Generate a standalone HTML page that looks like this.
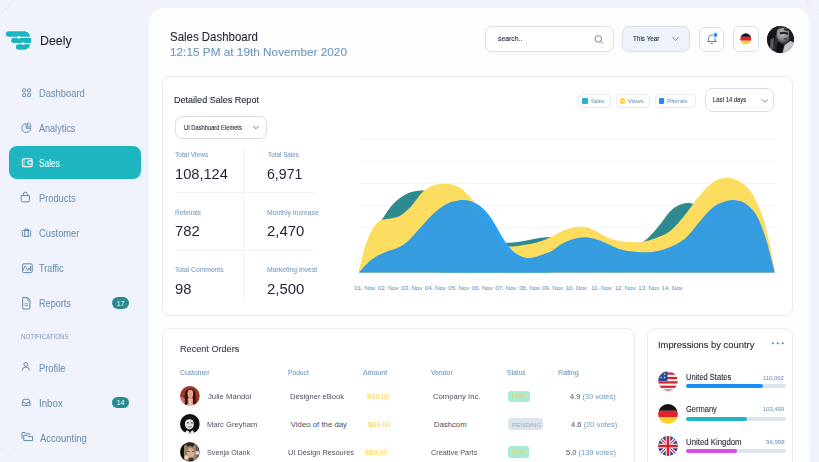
<!DOCTYPE html>
<html><head><meta charset="utf-8"><style>
html,body{margin:0;padding:0}
body{width:819px;height:462px;overflow:hidden;position:relative;background:#f0f3fb;font-family:"Liberation Sans", sans-serif}
.t{position:absolute;line-height:1;white-space:nowrap;transform-origin:0 0;-webkit-text-stroke:0.1px currentColor}
.a{position:absolute;box-sizing:border-box}
</style></head><body>
<!-- decorative arcs -->
<svg class="a" style="left:0;top:0" width="819" height="462">
  <circle cx="-60" cy="-60" r="95" fill="none" stroke="#d5d9e2" stroke-width="0.8" stroke-dasharray="3 2" opacity="0.8"/>
  <circle cx="850" cy="-25" r="50" fill="none" stroke="#dfe3ea" stroke-width="1" stroke-dasharray="4 3" opacity="0.8"/>
  <circle cx="-30" cy="500" r="60" fill="none" stroke="#dfe3ea" stroke-width="1" stroke-dasharray="4 3" opacity="0.6"/>
  <circle cx="852" cy="482" r="48" fill="none" stroke="#dfe3ea" stroke-width="1" stroke-dasharray="4 3" opacity="0.6"/>
</svg>
<!-- logo -->
<svg class="a" style="left:0;top:0" width="40" height="60">
  <defs><g id="lg">
    <path d="M8.6 31.3 H24 C27.5 31.3 29.5 33.5 30.2 36.8 H8.6 A2.75 2.75 0 0 1 8.6 31.3Z"/>
    <path d="M13.4 38.1 H31 V43 H13.4 A2.45 2.45 0 0 1 13.4 38.1Z"/>
    <path d="M18.6 44.3 H30.2 C29.5 47.5 27.5 49.8 24 49.8 H18.6 A2.75 2.75 0 0 1 18.6 44.3Z"/>
  </g></defs>
  <use href="#lg" fill="#fff" stroke="#fff" stroke-width="1.6"/>
  <use href="#lg" fill="#1cb4c0"/>
  <circle cx="18.9" cy="37.4" r="1.3" fill="#fff"/>
  <circle cx="23.1" cy="43.6" r="1.3" fill="#fff"/>
</svg>
<!-- active pill -->
<div class="a" style="left:8.6px;top:146.4px;width:132px;height:32.4px;border-radius:8px;background:#1eb6c1"></div>
<!-- sidebar icons -->
<svg class="a" style="left:0;top:0" width="150" height="462" fill="none" stroke="#6389a9" stroke-width="1">
  <!-- dashboard grid -->
  <rect x="22.75" y="88.95" width="2.9" height="2.9" rx="0.3" stroke-width="0.9"/>
  <rect x="27.65" y="88.95" width="2.9" height="2.9" rx="0.3" stroke-width="0.9"/>
  <rect x="22.75" y="93.75" width="2.9" height="2.9" rx="0.3" stroke-width="0.9"/>
  <rect x="27.65" y="93.75" width="2.9" height="2.9" rx="0.3" stroke-width="0.9"/>
  <!-- analytics pie -->
  <path d="M26 123.6 A4.4 4.4 0 1 0 30.7 128.2 H26 Z" stroke-width="0.95"/>
  <path d="M27.5 123.2 A3.8 3.8 0 0 1 31.2 126.9 H27.5 Z" stroke-width="0.9"/>
  <!-- products bag -->
  <path d="M21.2 195.6 H29.4 V200.6 A1.3 1.3 0 0 1 28.1 201.9 H22.5 A1.3 1.3 0 0 1 21.2 200.6 Z"/>
  <path d="M23.3 195.6 V194.2 A2 2 0 0 1 27.3 194.2 V195.6"/>
  <!-- customer briefcase -->
  <rect x="22.3" y="230.4" width="8.4" height="6" rx="1"/>
  <path d="M24.8 230.4 V229.2 H28.2 V230.4 M24.8 230.6 V236.2 M28.2 230.6 V236.2"/>
  <!-- traffic -->
  <rect x="22.6" y="263.8" width="9.6" height="8.8" rx="1.3"/>
  <path d="M23 270.2 L25.3 265.8 L27.6 270.6 L29.2 267.6 L30.6 270.8 V266" stroke-width="0.9"/>
  <!-- reports doc -->
  <path d="M22.7 297.6 H27.6 L29.9 299.9 V308.4 A0.6 0.6 0 0 1 29.3 309 H23.3 A0.6 0.6 0 0 1 22.7 308.4 Z"/>
  <path d="M27.4 297.8 V300.2 H29.8" stroke-width="0.8"/>
  <path d="M24.4 303.8 H28.2 M24.4 305.6 H28.2" stroke-width="0.9" opacity="0.8"/>
  <!-- profile -->
  <circle cx="25.8" cy="364.4" r="1.9"/>
  <path d="M22.2 370.5 A3.6 3.4 0 0 1 29.4 370.5"/>
  <!-- inbox -->
  <path d="M22.3 402.5 L23.6 399.3 H28.8 L30.1 402.5 V405.4 H22.3 Z M22.3 402.5 H24.8 A1.4 1.4 0 0 0 27.6 402.5 H30.1"/>
  <!-- accounting folders -->
  <path d="M22 438.5 V432.6 H25.2 L26.3 433.7 H29.6 V434.8"/>
  <path d="M23.8 435.3 H26.8 L27.9 436.4 H32.6 V440.6 H23.8 Z"/>
</svg>
<!-- sales wallet icon (white) -->
<svg class="a" style="left:0;top:0" width="40" height="180" fill="none" stroke="#ffffff" stroke-width="1.1">
  <rect x="22.5" y="158.8" width="9.6" height="7.8" rx="1"/>
  <path d="M32.1 160.9 H29.4 A1.5 1.5 0 0 0 29.4 164.3 H32.1"/>
  <path d="M24.2 159 V166.4" stroke-width="0.8" opacity="0.7"/>
</svg>
<!-- badges -->
<div class="a" style="left:112.2px;top:297.3px;width:17px;height:11.4px;border-radius:6px;background:#2a8a8e"></div>
<div class="a" style="left:112.1px;top:396.6px;width:17.3px;height:11.4px;border-radius:6px;background:#2a8a8e"></div>
<div class="t" style="left:116.6px;top:299.6px;font-size:7.2px;color:#fff;-webkit-text-stroke:0">17</div>
<div class="t" style="left:116.6px;top:398.9px;font-size:7.2px;color:#fff;-webkit-text-stroke:0">14</div>

<!-- main panel -->
<div class="a" style="left:149px;top:8px;width:661px;height:520px;border-radius:15px;background:#fdfdfe"></div>

<!-- header controls -->
<div class="a" style="left:485px;top:26px;width:129px;height:26px;border-radius:7px;border:1px solid #d5e0ea;background:#fff"></div>
<svg class="a" style="left:0;top:0" width="819" height="80" fill="none" stroke="#6a8caa" stroke-width="1">
  <circle cx="598.3" cy="38.9" r="3.3"/>
  <path d="M600.7 41.3 L603 43.6"/>
</svg>
<div class="a" style="left:622px;top:26px;width:68px;height:26px;border-radius:7px;border:1px solid #d5e0ea;background:#eef3fa"></div>
<div class="a" style="left:699px;top:27px;width:25px;height:25px;border-radius:6px;border:1px solid #d5e0ea;background:#fff"></div>
<svg class="a" style="left:0;top:0" width="819" height="80">
  <path d="M707.2 41.5 H716.8 M708.5 41.5 V38.4 A3.3 3.3 0 0 1 715.1 38.4 V41.5" fill="none" stroke="#5d86a8" stroke-width="1"/>
  <path d="M710.7 43.5 H712.9" stroke="#5d86a8" stroke-width="1"/>
  <circle cx="715.5" cy="34.9" r="2.3" fill="#1a8cf5" stroke="#fff" stroke-width="0.8"/>
</svg>
<div class="a" style="left:733px;top:26px;width:25.5px;height:26px;border-radius:6px;border:1px solid #d5e0ea;background:#fff"></div>
<svg class="a" style="left:739.7px;top:32.8px" width="11.6" height="11.6" viewBox="0 0 12 12">
  <defs><clipPath id="fc1"><circle cx="6" cy="6" r="5.7"/></clipPath></defs>
  <g clip-path="url(#fc1)"><rect x="0" y="0" width="12" height="4" fill="#151515"/><rect x="0" y="4" width="12" height="4" fill="#e3202c"/><rect x="0" y="8" width="12" height="4" fill="#fccf2a"/></g>
</svg>
<!-- header avatar -->
<svg class="a" style="left:766.8px;top:26px" width="27" height="27" viewBox="0 0 26 26">
  <defs>
    <clipPath id="av"><circle cx="13" cy="13" r="13"/></clipPath>
    <filter id="bl1"><feGaussianBlur stdDeviation="0.7"/></filter>
    <radialGradient id="fg" cx="0.45" cy="0.35" r="0.6"><stop offset="0" stop-color="#c2c4c7"/><stop offset="0.6" stop-color="#8a8d91"/><stop offset="1" stop-color="#3a3c40"/></radialGradient>
  </defs>
  <g clip-path="url(#av)">
    <rect width="26" height="26" fill="#2a2c30"/>
    <g filter="url(#bl1)">
    <path d="M0 0 H11 L8 10 L5 26 H0Z" fill="#141518"/>
    <path d="M9.5 3.5 Q14 0.5 20 2.5 L22.5 8 L21.5 14 L17.5 17.5 L12.5 16.5 L9 10Z" fill="url(#fg)"/>
    <path d="M12 6.2 Q16 4.8 20.5 6.6 L20 8.4 Q16 7.2 12.5 8.3Z" fill="#25272b"/>
    <path d="M16 11.5 L19.5 11.8 L18.5 13.3 L15.8 12.8Z" fill="#3a3c40"/>
    <path d="M21 1 L26 3 V17 L21.5 14Z" fill="#1c1e22"/>
    <path d="M15 26 L17 18.5 L22.5 14.5 L26 16 V26Z" fill="#c6c6c6"/>
    <path d="M8 26 L10.5 15.5 L16 18 L14.5 26Z" fill="#0f1012"/>
    <path d="M3.5 13 L6.5 11 L6 22 L3 24Z" fill="#5a5d61"/>
    <path d="M17 2 L21 3 L20 5 L16 4Z" fill="#2e3034"/>
    </g>
  </g>
</svg>
<!-- sales card -->
<div class="a" style="left:162px;top:76px;width:631px;height:240px;border-radius:8px;border:1px solid #e9edf3;background:#fff"></div>
<div class="a" style="left:175px;top:116px;width:92px;height:23px;border-radius:7px;border:1px solid #d5e0ea;background:#fff"></div>
<div class="a" style="left:578px;top:94px;width:33px;height:14px;border-radius:4px;border:1px solid #e7ecf2;background:#fff"></div>
<div class="a" style="left:615.5px;top:94px;width:34.5px;height:14px;border-radius:4px;border:1px solid #e7ecf2;background:#fff"></div>
<div class="a" style="left:654.5px;top:94px;width:41px;height:14px;border-radius:4px;border:1px solid #e7ecf2;background:#fff"></div>
<div class="a" style="left:581.9px;top:98.4px;width:5.9px;height:5.4px;border-radius:1.3px;background:#1fb5c1"></div>
<div class="a" style="left:619.5px;top:98.4px;width:5.9px;height:5.4px;border-radius:1.3px;background:#fdd95a"></div>
<div class="a" style="left:658.6px;top:98.4px;width:5.9px;height:5.4px;border-radius:1.3px;background:#1a8cf5"></div>
<div class="a" style="left:705px;top:88px;width:69px;height:24px;border-radius:7px;border:1px solid #d5e0ea;background:#fff"></div>
<svg class="a" style="left:0;top:0" width="819" height="130" fill="none" stroke="#6a8caa" stroke-width="1">
  <path d="M672.6 37.2 L675.6 40.6 L678.7 37.2"/>
  <path d="M253.3 126 L255.9 128.9 L258.6 126"/>
  <path d="M762 99.4 L764.9 102.4 L767.8 99.4"/>
</svg>
<!-- stats dividers -->
<div class="a" style="left:243px;top:150px;width:1px;height:150px;background:#eef1f5"></div>
<div class="a" style="left:175px;top:192px;width:140px;height:1px;background:#eef1f5"></div>
<div class="a" style="left:175px;top:250px;width:140px;height:1px;background:#eef1f5"></div>
<!-- chart gridlines -->
<svg class="a" style="left:0;top:0" width="819" height="300" fill="none" stroke="#f3f5f8" stroke-width="1">
  <path d="M358.5 139.5 H777 M358.5 161.5 H777 M358.5 183.5 H777 M358.5 205.5 H777 M358.5 227.5 H777 M358.5 249.5 H777"/>
</svg>

<!-- recent orders card -->
<div class="a" style="left:162px;top:328px;width:473px;height:200px;border-radius:8px;border:1px solid #e9edf3;background:#fff"></div>
<!-- impressions card -->
<div class="a" style="left:647px;top:328px;width:146px;height:200px;border-radius:8px;border:1px solid #e9edf3;background:#fff"></div>
<svg class="a" style="left:0;top:0" width="819" height="462" fill="#6a8caa">
  <circle cx="772.9" cy="343.3" r="1.1"/><circle cx="777.8" cy="343.3" r="1.1"/><circle cx="782.7" cy="343.3" r="1.1"/>
</svg>
<!-- progress bars -->
<div class="a" style="left:686.3px;top:384px;width:100.1px;height:4.3px;border-radius:3px;background:#dde5ec"></div>
<div class="a" style="left:686.3px;top:384px;width:76.9px;height:4.3px;border-radius:3px;background:#1a8cf5"></div>
<div class="a" style="left:686.3px;top:416.8px;width:100.1px;height:4.1px;border-radius:3px;background:#dde5ec"></div>
<div class="a" style="left:686.3px;top:416.8px;width:60.4px;height:4.1px;border-radius:3px;background:#1fb5c1"></div>
<div class="a" style="left:686.3px;top:449px;width:100.1px;height:4px;border-radius:3px;background:#dde5ec"></div>
<div class="a" style="left:686.3px;top:449px;width:50.9px;height:4px;border-radius:3px;background:#d94fe6"></div>
<!-- flags -->
<svg class="a" style="left:658.3px;top:370.9px" width="20" height="20" viewBox="0 0 20 20">
  <defs><clipPath id="us"><circle cx="10" cy="10" r="9.8"/></clipPath></defs>
  <g clip-path="url(#us)">
    <rect width="20" height="20" fill="#f4f4f4"/>
    <rect y="1.5" width="20" height="2.2" fill="#d8202d"/><rect y="5.9" width="20" height="2.2" fill="#d8202d"/>
    <rect y="10.3" width="20" height="2.2" fill="#d8202d"/><rect y="14.7" width="20" height="2.2" fill="#d8202d"/>
    <rect y="18.6" width="20" height="2" fill="#d8202d"/>
    <rect x="0" y="0" width="9.5" height="10" fill="#2a4c9b"/>
    <g fill="#fff"><circle cx="3" cy="3" r="0.7"/><circle cx="6.5" cy="3" r="0.7"/><circle cx="3" cy="6.5" r="0.7"/><circle cx="6.5" cy="6.5" r="0.7"/></g>
  </g>
</svg>
<svg class="a" style="left:657.9px;top:403.6px" width="20" height="20" viewBox="0 0 20 20">
  <defs><clipPath id="de"><circle cx="10" cy="10" r="9.9"/></clipPath></defs>
  <g clip-path="url(#de)"><rect width="20" height="6.8" fill="#141414"/><rect y="6.8" width="20" height="6.6" fill="#e3202c"/><rect y="13.4" width="20" height="6.6" fill="#fcd22a"/></g>
</svg>
<svg class="a" style="left:657.9px;top:435.7px" width="20" height="20" viewBox="0 0 20 20">
  <defs><clipPath id="uk"><circle cx="10" cy="10" r="9.9"/></clipPath></defs>
  <g clip-path="url(#uk)">
    <rect width="20" height="20" fill="#2d4da0"/>
    <path d="M0 0 L20 20 M20 0 L0 20" stroke="#fff" stroke-width="3.2"/>
    <path d="M0 0 L20 20 M20 0 L0 20" stroke="#d8202d" stroke-width="1.1"/>
    <path d="M10 0 V20 M0 10 H20" stroke="#fff" stroke-width="4.5"/>
    <path d="M10 0 V20 M0 10 H20" stroke="#d8202d" stroke-width="2.6"/>
  </g>
</svg>
<!-- order avatars -->
<svg class="a" style="left:180.2px;top:386.1px" width="19.8" height="19.8" viewBox="0 0 20 20">
  <defs><clipPath id="a1"><circle cx="10" cy="10" r="10"/></clipPath><filter id="bl2"><feGaussianBlur stdDeviation="0.55"/></filter></defs>
  <g clip-path="url(#a1)"><g filter="url(#bl2)">
    <rect width="20" height="20" fill="#9a3a2a"/>
    <path d="M4 20 L5 6 Q10 0 15.5 5 L16.5 20Z" fill="#4a1812"/>
    <ellipse cx="10.5" cy="8" rx="3" ry="4.2" fill="#e4a090"/>
    <path d="M7.5 12.5 Q10.5 11 13.5 12.5 L14 20 H7Z" fill="#d99484"/>
    <path d="M9.5 13 H11.5 V20 H9.5Z" fill="#f2cfc4"/>
    <path d="M0 11 Q3 10.5 5 13.5 L4.5 20 H0Z" fill="#c87868"/>
    <path d="M6.5 6 L7.2 18 M14.3 6 L13.8 18" stroke="#250806" stroke-width="1.1"/>
  </g></g>
</svg>
<svg class="a" style="left:180.2px;top:414.2px" width="19.8" height="19.8" viewBox="0 0 20 20">
  <defs><clipPath id="a2"><circle cx="10" cy="10" r="10"/></clipPath><filter id="bl3"><feGaussianBlur stdDeviation="0.4"/></filter></defs>
  <g clip-path="url(#a2)"><g filter="url(#bl3)">
    <rect width="20" height="20" fill="#111"/>
    <ellipse cx="9.5" cy="10" rx="4.5" ry="5.6" fill="#e4e4e4"/>
    <path d="M5 4 Q10 1 15 4.5 L14 6.5 Q10 4 5.5 6.5Z" fill="#181818"/>
    <path d="M7 9 H9 M11 9 H13" stroke="#222" stroke-width="1"/>
    <path d="M8 13 H12" stroke="#555" stroke-width="0.8"/>
    <path d="M4 20 L7 16.5 L10 18 L13 16.5 L15 20Z" fill="#e8e8e8"/>
    <path d="M9 17 L10 20 L11 17Z" fill="#111"/>
  </g></g>
</svg>
<svg class="a" style="left:180.1px;top:442.4px" width="19.8" height="19.8" viewBox="0 0 20 20">
  <defs><clipPath id="a3"><circle cx="10" cy="10" r="10"/></clipPath><filter id="bl4"><feGaussianBlur stdDeviation="0.5"/></filter></defs>
  <g clip-path="url(#a3)"><g filter="url(#bl4)">
    <rect width="20" height="20" fill="#6a5a50"/>
    <path d="M0 0 H5 L4 20 H0Z" fill="#0e0e10"/>
    <path d="M4 4 Q10 0 16 3 L17 20 H4Z" fill="#9a8468"/>
    <path d="M6 1 Q11 -1 15 2 L13 5 Q10 3 7 5Z" fill="#2a2626"/>
    <ellipse cx="11" cy="11" rx="3.8" ry="5" fill="#d8ae92"/>
    <path d="M7.5 9.5 H10 M12 9.5 H14.5" stroke="#4a3a34" stroke-width="0.8"/>
    <circle cx="17.5" cy="11" r="2" fill="#e2d0ea"/>
    <circle cx="6.5" cy="15.5" r="2" fill="#d4e6c0"/>
    <path d="M8 20 L10 16 L13 16 L14 20Z" fill="#2a2a2e"/>
  </g></g>
</svg>
<!-- status badges -->
<div class="a" style="left:508.4px;top:390.5px;width:21.2px;height:11.3px;border-radius:3px;background:#a6ebd2"></div>
<div class="a" style="left:508.4px;top:418.3px;width:34.2px;height:12px;border-radius:3px;background:#dde5ec"></div>
<div class="a" style="left:508.1px;top:446.4px;width:21px;height:12px;border-radius:3px;background:#a6ebd2"></div>




<svg class="a" style="left:0;top:0" width="819" height="462">
<path d="M358.9 272.4 C360.1 268.3 363.5 254.7 366.0 248.0 C368.5 241.3 371.3 236.8 374.0 232.0 C376.7 227.2 378.7 224.2 382.0 219.4 C385.3 214.6 389.7 207.4 394.0 203.0 C398.3 198.6 403.5 195.3 408.0 193.2 C412.5 191.1 417.3 190.5 421.0 190.4 C424.7 190.3 426.8 190.9 430.0 192.5 C433.2 194.1 435.8 195.1 440.0 200.0 C444.2 204.9 449.2 215.3 455.0 222.0 C460.8 228.7 466.7 236.5 475.0 240.0 C483.3 243.5 496.1 242.8 504.7 242.9 C513.3 243.0 519.7 241.4 526.6 240.4 C533.5 239.4 539.0 237.6 546.2 237.2 C553.4 236.8 561.0 236.7 570.0 238.0 C579.0 239.3 590.0 243.7 600.0 245.0 C610.0 246.3 622.5 246.8 630.0 246.0 C637.5 245.2 640.3 243.6 645.0 240.4 C649.7 237.2 654.1 231.5 658.2 226.8 C662.3 222.1 666.1 215.6 669.5 212.0 C672.9 208.4 675.4 206.7 678.6 205.2 C681.8 203.7 684.5 202.5 688.9 203.0 C693.3 203.5 698.1 204.8 705.0 208.0 C711.9 211.2 721.7 216.7 730.0 222.0 C738.3 227.3 748.7 234.5 755.0 240.0 C761.3 245.5 764.7 249.6 768.0 255.0 C771.3 260.4 773.7 269.5 774.8 272.4 L774.8 272.4 L358.9 272.4 Z" fill="#2f8a8f"/>
<path d="M358.9 272.4 C359.7 268.8 361.8 257.3 363.7 250.8 C365.6 244.3 368.0 237.9 370.2 233.4 C372.4 228.9 374.6 225.9 376.6 223.7 C378.6 221.5 379.5 220.9 382.0 220.0 C384.5 219.1 388.7 219.0 391.8 218.3 C394.9 217.6 397.2 217.6 400.5 215.6 C403.8 213.6 407.7 210.0 411.3 206.2 C414.9 202.4 418.5 196.0 422.1 192.6 C425.7 189.2 429.0 187.0 433.0 185.5 C437.0 184.0 441.7 183.5 446.0 183.7 C450.3 183.9 455.3 185.1 458.9 186.9 C462.5 188.7 464.9 191.8 467.6 194.5 C470.3 197.2 471.4 197.5 475.1 203.1 C478.8 208.7 485.1 221.0 490.0 228.0 C494.9 235.0 498.6 242.5 504.7 245.3 C510.8 248.1 519.7 245.6 526.6 244.6 C533.5 243.6 540.1 241.5 546.2 239.2 C552.3 236.9 557.6 232.7 563.3 230.6 C569.0 228.5 575.5 226.7 580.4 226.5 C585.3 226.3 587.3 227.3 592.6 229.4 C597.9 231.5 605.6 237.1 612.1 239.2 C618.6 241.3 625.9 241.8 631.6 242.1 C637.3 242.4 640.0 242.9 646.3 241.1 C652.6 239.3 663.0 235.9 669.5 231.4 C676.0 226.9 680.6 220.2 685.5 214.3 C690.4 208.4 694.6 201.4 699.1 196.1 C703.6 190.8 708.5 185.5 712.7 182.5 C716.9 179.5 720.3 178.5 724.1 178.0 C727.9 177.5 731.3 177.6 735.5 179.5 C739.7 181.4 744.9 184.1 749.1 189.3 C753.3 194.5 757.1 202.0 760.5 210.9 C763.9 219.8 767.1 232.4 769.5 242.7 C771.9 252.9 773.9 267.4 774.8 272.4 L774.8 272.4 L358.9 272.4 Z" fill="#fddd5f"/>
<path d="M440.0 210.0 C443.1 208.4 453.2 201.8 458.9 200.5 C464.6 199.2 469.8 201.0 474.0 202.5 C478.2 204.0 480.8 206.4 484.0 209.5 C487.2 212.6 490.2 216.8 493.0 221.0 C495.8 225.2 498.6 231.0 501.0 235.0 C503.4 239.0 505.0 241.9 507.5 245.0 C510.0 248.1 512.4 251.3 516.0 253.5 C519.6 255.7 523.6 258.3 529.0 258.2 C534.4 258.1 545.3 253.5 548.6 252.6 L548.6 272.4 L440.0 272.4 Z" fill="#2aa0f6"/>
<path d="M358.9 272.4 C360.4 270.8 365.1 265.4 368.0 262.7 C370.9 260.0 373.4 258.1 376.6 256.2 C379.9 254.3 384.2 252.5 387.5 251.2 C390.8 249.9 392.9 250.1 396.1 248.6 C399.4 247.1 403.0 245.5 407.0 242.1 C411.0 238.7 415.7 232.7 420.0 228.0 C424.3 223.3 428.7 218.0 433.0 214.0 C437.3 210.0 441.7 206.4 446.0 204.2 C450.3 201.9 454.6 200.8 458.9 200.5 C463.2 200.2 467.6 200.1 471.9 202.7 C476.2 205.3 480.9 210.8 484.9 216.1 C488.9 221.4 491.6 228.4 495.7 234.5 C499.8 240.6 503.9 248.7 509.5 252.6 C515.0 256.6 522.5 258.2 529.0 258.2 C535.5 258.2 542.9 255.1 548.6 252.6 C554.3 250.1 557.6 245.5 563.3 242.9 C569.0 240.3 576.7 237.6 582.8 237.2 C588.9 236.8 593.8 238.4 599.9 240.4 C606.0 242.4 613.3 247.1 619.4 249.0 C625.5 250.9 630.8 251.4 636.5 251.9 C642.2 252.4 648.1 252.6 653.6 251.8 C659.1 251.0 664.2 249.6 669.5 247.3 C674.8 245.0 680.6 242.4 685.5 238.2 C690.4 234.0 694.6 227.4 699.1 222.3 C703.6 217.2 708.5 210.9 712.7 207.5 C716.9 204.1 720.7 203.1 724.1 201.8 C727.5 200.6 729.8 199.8 733.2 200.0 C736.6 200.2 740.7 200.6 744.5 203.0 C748.3 205.4 752.5 208.8 755.9 214.3 C759.3 219.8 762.5 228.9 765.0 235.9 C767.5 242.9 769.1 250.3 770.7 256.4 C772.3 262.5 774.1 269.7 774.8 272.4 L774.8 272.4 L358.9 272.4 Z" fill="#359ddf"/>
</svg>
<div class="t" style="left:39.96px;top:33.92px;font-size:13.2px;color:#1f2533;transform:scaleX(0.9405);-webkit-text-stroke:0.1px currentColor;">Deely</div><div class="t" style="left:38.90px;top:89.23px;font-size:10.0px;color:#6a8fb0;transform:scaleX(0.9347);-webkit-text-stroke:0.05px currentColor;">Dashboard</div><div class="t" style="left:39.00px;top:124.03px;font-size:10.0px;color:#6a8fb0;transform:scaleX(0.9057);-webkit-text-stroke:0.05px currentColor;">Analytics</div><div class="t" style="left:39.18px;top:159.43px;font-size:10.0px;color:#ffffff;transform:scaleX(0.8330);-webkit-text-stroke:0.05px currentColor;">Sales</div><div class="t" style="left:38.80px;top:194.23px;font-size:10.0px;color:#6a8fb0;transform:scaleX(0.9281);-webkit-text-stroke:0.05px currentColor;">Products</div><div class="t" style="left:38.73px;top:229.33px;font-size:10.0px;color:#6a8fb0;transform:scaleX(0.9310);-webkit-text-stroke:0.05px currentColor;">Customer</div><div class="t" style="left:39.28px;top:264.43px;font-size:10.0px;color:#6a8fb0;transform:scaleX(0.8972);-webkit-text-stroke:0.05px currentColor;">Traffic</div><div class="t" style="left:38.82px;top:299.13px;font-size:10.0px;color:#6a8fb0;transform:scaleX(0.9118);-webkit-text-stroke:0.05px currentColor;">Reports</div><div class="t" style="left:39.00px;top:363.83px;font-size:10.0px;color:#6a8fb0;transform:scaleX(0.9321);-webkit-text-stroke:0.05px currentColor;">Profile</div><div class="t" style="left:38.73px;top:398.83px;font-size:10.0px;color:#6a8fb0;transform:scaleX(0.9720);-webkit-text-stroke:0.05px currentColor;">Inbox</div><div class="t" style="left:39.60px;top:433.93px;font-size:10.0px;color:#6a8fb0;transform:scaleX(0.9469);-webkit-text-stroke:0.05px currentColor;">Accounting</div><div class="t" style="left:20.77px;top:332.60px;font-size:7.2px;color:#7b98b4;transform:scaleX(0.8682);-webkit-text-stroke:0;">NOTIFICATIONS</div><div class="t" style="left:169.73px;top:30.97px;font-size:12.2px;color:#1f2533;transform:scaleX(0.9398);-webkit-text-stroke:0.1px currentColor;">Sales Dashboard</div><div class="t" style="left:170.23px;top:46.96px;font-size:11.5px;color:#6f97bf;transform:scaleX(1.0251);">12:15 PM at 19th November 2020</div><div class="t" style="left:497.57px;top:35.36px;font-size:7.6px;color:#1f2533;transform:scaleX(0.9000);-webkit-text-stroke:0.1px currentColor;">search..</div><div class="t" style="left:632.69px;top:35.36px;font-size:7.6px;color:#1f2533;transform:scaleX(0.8352);-webkit-text-stroke:0.1px currentColor;">This Year</div><div class="t" style="left:174.01px;top:94.90px;font-size:9.8px;color:#1f2533;transform:scaleX(0.9227);-webkit-text-stroke:0.1px currentColor;">Detailed Sales Repot</div><div class="t" style="left:184.08px;top:124.94px;font-size:6.8px;color:#1f2533;transform:scaleX(0.8458);-webkit-text-stroke:0.1px currentColor;">UI Dashboard Elemets</div><div class="t" style="left:590.78px;top:98.15px;font-size:6.2px;color:#7c9dc0;transform:scaleX(0.8733);">Sales</div><div class="t" style="left:628.16px;top:98.15px;font-size:6.2px;color:#7c9dc0;transform:scaleX(0.9625);">Views</div><div class="t" style="left:667.13px;top:98.15px;font-size:6.2px;color:#7c9dc0;transform:scaleX(0.9476);">Rferrals</div><div class="t" style="left:713.48px;top:97.36px;font-size:6.9px;color:#1f2533;transform:scaleX(0.8471);-webkit-text-stroke:0.1px currentColor;">Last 14 days</div><div class="t" style="left:175.47px;top:151.30px;font-size:7.2px;color:#7c9dc0;transform:scaleX(0.9203);">Total Views</div><div class="t" style="left:175.11px;top:166.06px;font-size:15.4px;color:#1f2533;transform:scaleX(0.9500);-webkit-text-stroke:0;">108,124</div><div class="t" style="left:267.78px;top:151.30px;font-size:7.2px;color:#7c9dc0;transform:scaleX(0.8806);">Total Sales</div><div class="t" style="left:267.11px;top:166.06px;font-size:15.4px;color:#1f2533;transform:scaleX(0.9189);-webkit-text-stroke:0;">6,971</div><div class="t" style="left:175.05px;top:208.70px;font-size:7.2px;color:#7c9dc0;transform:scaleX(0.8912);">Referrals</div><div class="t" style="left:175.18px;top:223.26px;font-size:15.4px;color:#1f2533;transform:scaleX(0.9649);-webkit-text-stroke:0;">782</div><div class="t" style="left:267.23px;top:208.70px;font-size:7.2px;color:#7c9dc0;transform:scaleX(0.9463);">Monthly Increase</div><div class="t" style="left:266.97px;top:223.26px;font-size:15.4px;color:#1f2533;transform:scaleX(0.9691);-webkit-text-stroke:0;">2,470</div><div class="t" style="left:175.27px;top:266.30px;font-size:7.2px;color:#7c9dc0;transform:scaleX(0.9359);">Total Comments</div><div class="t" style="left:175.18px;top:280.76px;font-size:15.4px;color:#1f2533;transform:scaleX(0.9651);-webkit-text-stroke:0;">98</div><div class="t" style="left:267.22px;top:266.30px;font-size:7.2px;color:#7c9dc0;transform:scaleX(0.9531);">Marketing Invest</div><div class="t" style="left:266.97px;top:280.76px;font-size:15.4px;color:#1f2533;transform:scaleX(0.9691);-webkit-text-stroke:0;">2,500</div><div class="t" style="left:354.35px;top:285.23px;font-size:6.1px;color:#7c9dc0;">01. Nov</div><div class="t" style="left:377.75px;top:285.23px;font-size:6.1px;color:#7c9dc0;">02. Nov</div><div class="t" style="left:401.25px;top:285.23px;font-size:6.1px;color:#7c9dc0;">03. Nov</div><div class="t" style="left:424.85px;top:285.23px;font-size:6.1px;color:#7c9dc0;">04. Nov</div><div class="t" style="left:448.25px;top:285.23px;font-size:6.1px;color:#7c9dc0;">05. Nov</div><div class="t" style="left:471.75px;top:285.23px;font-size:6.1px;color:#7c9dc0;">06. Nov</div><div class="t" style="left:495.35px;top:285.23px;font-size:6.1px;color:#7c9dc0;">07. Nov</div><div class="t" style="left:519.15px;top:285.23px;font-size:6.1px;color:#7c9dc0;">08. Nov</div><div class="t" style="left:542.15px;top:285.23px;font-size:6.1px;color:#7c9dc0;">09. Nov</div><div class="t" style="left:565.70px;top:285.23px;font-size:6.1px;color:#7c9dc0;">10. Nov</div><div class="t" style="left:591.30px;top:285.23px;font-size:6.1px;color:#7c9dc0;">11. Nov</div><div class="t" style="left:614.70px;top:285.23px;font-size:6.1px;color:#7c9dc0;">12. Nov</div><div class="t" style="left:638.30px;top:285.23px;font-size:6.1px;color:#7c9dc0;">13. Nov</div><div class="t" style="left:661.60px;top:285.23px;font-size:6.1px;color:#7c9dc0;">14. Nov</div><div class="t" style="left:179.56px;top:344.71px;font-size:9.2px;color:#3a4050;transform:scaleX(0.9923);-webkit-text-stroke:0.1px currentColor;">Recent Orders</div><div class="t" style="left:179.84px;top:369.43px;font-size:7.4px;color:#6f98c2;transform:scaleX(0.9175);">Customer</div><div class="t" style="left:287.95px;top:369.43px;font-size:7.4px;color:#6f98c2;transform:scaleX(0.9022);">Poduct</div><div class="t" style="left:363.40px;top:369.43px;font-size:7.4px;color:#6f98c2;transform:scaleX(0.9451);">Amount</div><div class="t" style="left:430.50px;top:369.43px;font-size:7.4px;color:#6f98c2;transform:scaleX(0.9247);">Vendor</div><div class="t" style="left:506.68px;top:369.43px;font-size:7.4px;color:#6f98c2;transform:scaleX(0.8878);">Status</div><div class="t" style="left:557.92px;top:369.43px;font-size:7.4px;color:#6f98c2;transform:scaleX(0.9659);">Rating</div><div class="t" style="left:207.65px;top:392.89px;font-size:7.8px;color:#4c515c;transform:scaleX(0.9884);-webkit-text-stroke:0;">Julie Mandol</div><div class="t" style="left:289.87px;top:392.89px;font-size:7.8px;color:#4c515c;transform:scaleX(0.9753);-webkit-text-stroke:0;">Designer eBook</div><div class="t" style="left:367.36px;top:392.89px;font-size:7.8px;color:#fdd04a;transform:scaleX(0.9505);-webkit-text-stroke:0;">$49.00</div><div class="t" style="left:433.31px;top:392.89px;font-size:7.8px;color:#4c515c;transform:scaleX(0.9851);-webkit-text-stroke:0;">Company Inc.</div><div class="t" style="left:570.46px;top:392.89px;font-size:7.8px;color:#4c515c;transform:scaleX(0.9574);-webkit-text-stroke:0;">4.9 <span style="color:#6f98c2">(39 votes)</span></div><div class="t" style="left:207.17px;top:421.09px;font-size:7.8px;color:#4c515c;transform:scaleX(0.9771);-webkit-text-stroke:0;">Marc Greyham</div><div class="t" style="left:290.75px;top:421.09px;font-size:7.8px;color:#4c515c;-webkit-text-stroke:0;">Video of the day</div><div class="t" style="left:368.06px;top:421.09px;font-size:7.8px;color:#fdd04a;transform:scaleX(0.9505);-webkit-text-stroke:0;">$89.00</div><div class="t" style="left:433.75px;top:421.09px;font-size:7.8px;color:#4c515c;-webkit-text-stroke:0;">Dashcom</div><div class="t" style="left:571.16px;top:421.09px;font-size:7.8px;color:#4c515c;transform:scaleX(0.9702);-webkit-text-stroke:0;">4.6 <span style="color:#6f98c2">(20 votes)</span></div><div class="t" style="left:207.44px;top:449.19px;font-size:7.8px;color:#4c515c;transform:scaleX(0.9290);-webkit-text-stroke:0;">Svenja Olank</div><div class="t" style="left:288.33px;top:449.19px;font-size:7.8px;color:#4c515c;transform:scaleX(0.9449);-webkit-text-stroke:0;">UI Design Resoures</div><div class="t" style="left:364.76px;top:449.19px;font-size:7.8px;color:#fdd04a;transform:scaleX(0.9505);-webkit-text-stroke:0;">$89.00</div><div class="t" style="left:430.83px;top:449.19px;font-size:7.8px;color:#4c515c;transform:scaleX(0.9374);-webkit-text-stroke:0;">Creative Parts</div><div class="t" style="left:565.66px;top:449.19px;font-size:7.8px;color:#4c515c;transform:scaleX(0.9620);-webkit-text-stroke:0;">5.0 <span style="color:#6f98c2">(139 votes)</span></div><div class="t" style="left:512.30px;top:393.79px;font-size:5.8px;color:#f0d060;-webkit-text-stroke:0;">PAID</div><div class="t" style="left:512.10px;top:449.99px;font-size:5.8px;color:#f0d060;transform:scaleX(0.9920);-webkit-text-stroke:0;">PAID</div><div class="t" style="left:512.06px;top:421.72px;font-size:6.0px;color:#9aadc2;transform:scaleX(1.0830);-webkit-text-stroke:0;">PENDING</div><div class="t" style="left:658.04px;top:340.10px;font-size:9.8px;color:#1f2533;transform:scaleX(0.9564);-webkit-text-stroke:0.1px currentColor;">Impressions by country</div><div class="t" style="left:686.12px;top:373.17px;font-size:8.3px;color:#1f2533;transform:scaleX(0.9067);-webkit-text-stroke:0.1px currentColor;">United States</div><div class="t" style="left:763.41px;top:374.52px;font-size:6.0px;color:#7c9dc0;transform:scaleX(0.9805);">110,002</div><div class="t" style="left:685.55px;top:404.97px;font-size:8.3px;color:#1f2533;transform:scaleX(0.9045);-webkit-text-stroke:0.1px currentColor;">Germany</div><div class="t" style="left:763.11px;top:406.32px;font-size:6.0px;color:#7c9dc0;transform:scaleX(0.9714);">103,499</div><div class="t" style="left:685.89px;top:437.77px;font-size:8.3px;color:#1f2533;transform:scaleX(0.9420);-webkit-text-stroke:0.1px currentColor;">United Kingdom</div><div class="t" style="left:765.75px;top:439.12px;font-size:6.0px;color:#7c9dc0;transform:scaleX(1.0141);">96,998</div>
</body></html>
